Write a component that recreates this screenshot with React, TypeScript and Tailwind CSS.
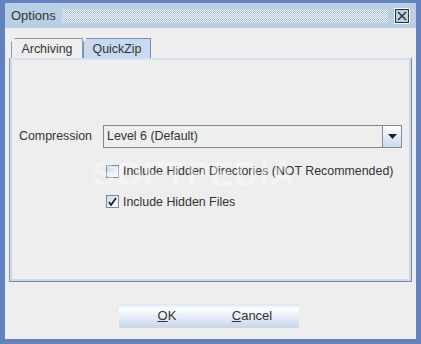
import * as React from "react";

const font = "font-['Liberation_Sans',Arial,sans-serif]";

function Checkbox({ checked }: { checked?: boolean }) {
  return (
    <span className="relative flex h-[13px] w-[13px] items-center justify-center border border-[#7a8a99] bg-gradient-to-br from-[#c8daef] to-white">
      {checked ? (
        <svg width="9" height="9" viewBox="0 0 9 9" className="absolute">
          <path d="M1 5 L3 8 L8 1" fill="none" stroke="#222" strokeWidth="1.8" />
        </svg>
      ) : null}
    </span>
  );
}

export default function App() {
  return (
    <div className={`${font} relative flex h-[344px] w-[421px] flex-col bg-[#6382bf] px-[5px] pb-[5px] pt-[3px] text-[12.4px] text-[#333]`}>
      {/* title bar */}
      <div className="flex h-[25px] shrink-0 items-center gap-[6px] bg-[#b8cfe5] pl-[6px] pr-[6px]">
        <span className="text-[13px] text-[#333]">Options</span>
        <div className="h-[14px] flex-1 bg-[repeating-conic-gradient(#f4f7fc_0_25%,#aac3dd_0_50%)] bg-[length:2px_2px]" />
        <div className="flex h-[16px] w-[16px] items-center justify-center border border-white bg-[#b8cfe5] shadow-[inset_0_0_0_1px_#333]">
          <svg width="10" height="10" viewBox="0 0 10 10">
            <path d="M1 1 L9 9 M9 1 L1 9" stroke="#222" strokeWidth="1.2" />
          </svg>
        </div>
      </div>

      {/* body */}
      <div className="flex flex-1 flex-col bg-[#eeeeee] px-[4px] pt-[10px]">
        {/* tabs */}
        <div className="flex h-[20px] items-end pl-[2px]">
          <div className="flex h-[20px] w-[72px] items-center justify-center border border-b-0 border-[#8a99a6] bg-[#eeeeee] [clip-path:polygon(4px_0,100%_0,100%_100%,0_100%,0_4px)] pt-[1px]">
            Archiving
          </div>
          <div className="flex h-[20px] w-[68px] items-center justify-center border border-b-0 border-[#7c8fb0] bg-[#c8daef] [clip-path:polygon(4px_0,100%_0,100%_100%,0_100%,0_4px)] pt-[1px]">
            QuickZip
          </div>
        </div>
        {/* tab panel */}
        <div className="h-[224px] border border-t-0 border-[#7f8d9a] border-l-[#8a99a6]">
          <div className="relative flex h-full flex-col border-[2px] border-[#c8daef] border-t-[#d6e3f3] px-[7px] pt-[65px]">
            <div className="flex items-center">
              <span className="w-[84px]">Compression</span>
              <div className="flex h-[23px] flex-1 items-center border border-[#7a8a99] bg-[#eeeeee]">
                <span className="flex-1 pl-[3px]">Level 6 (Default)</span>
                <div className="flex h-full w-[19px] items-center justify-center border-l border-[#7a8a99] bg-gradient-to-b from-white to-[#c8daef]">
                  <svg width="9" height="5" viewBox="0 0 9 5">
                    <path d="M0 0 H9 L4.5 5 Z" fill="#222" />
                  </svg>
                </div>
              </div>
            </div>
            <div className="mt-[14px] flex items-center gap-[4px] pl-[87px]">
              <Checkbox />
              <span>Include Hidden Directories (NOT Recommended)</span>
            </div>
            <div className="mt-[12px] flex items-center gap-[4px] pl-[87px]">
              <Checkbox checked />
              <span>Include Hidden Files</span>
            </div>
            <span className="pointer-events-none absolute left-[80px] top-[88px] text-[34px] font-bold tracking-[1px] text-white/40">
              SOFTPEDIA
            </span>
          </div>
        </div>

        {/* buttons */}
        <div className="flex flex-1 items-end justify-center pb-[11px] pr-[4px]">
          <div className="flex h-[24px] w-[180px] bg-[linear-gradient(#dbe7f4,#ffffff_20%,#f0f5fb_40%,#c5d6ea)]">
            <button className="flex-1 pl-[6px] text-[13px] text-[#333]">
              <span className="underline">O</span>K
            </button>
            <button className="flex-1 pr-[4px] text-[13px] text-[#333]">
              <span className="underline">C</span>ancel
            </button>
          </div>
        </div>
      </div>
    </div>
  );
}
